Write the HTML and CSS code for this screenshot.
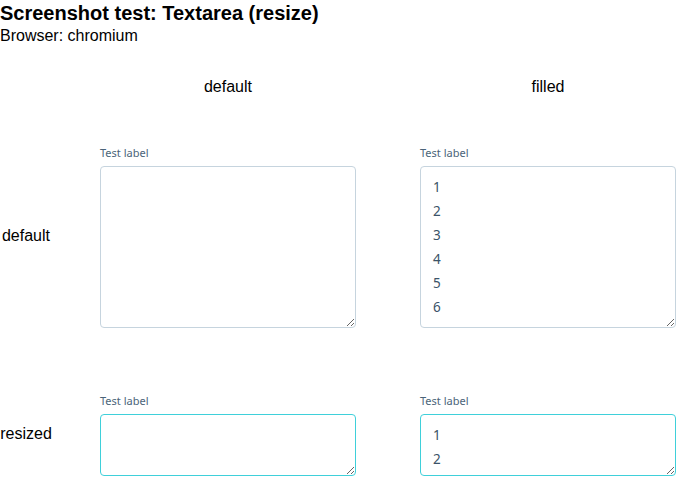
FILE: index.html
```html
<!DOCTYPE html>
<html>
<head>
<meta charset="utf-8">
<link rel="stylesheet" href="styles.css">
</head>
<body>
<h1 class="title">Screenshot test: Textarea (resize)</h1>
<p class="browser">Browser: chromium</p>
<div class="grid">
  <div class="corner"></div>
  <div class="col-head">default</div>
  <div class="col-head">filled</div>

  <div class="row-head">default</div>
  <div class="field">
    <label class="label">Test label</label>
    <textarea class="ta ta-default"></textarea>
  </div>
  <div class="field">
    <label class="label">Test label</label>
    <textarea class="ta ta-default">1
2
3
4
5
6</textarea>
  </div>

  <div class="row-head">resized</div>
  <div class="field">
    <label class="label">Test label</label>
    <textarea class="ta ta-resized"></textarea>
  </div>
  <div class="field">
    <label class="label">Test label</label>
    <textarea class="ta ta-resized">1
2</textarea>
  </div>
</div>
</body>
</html>
```
FILE: styles.css
```css
html, body {
  margin: 0;
  padding: 0;
  background: #fff;
}
body {
  font-family: "Liberation Sans", Arial, sans-serif;
  color: #000;
}
.title {
  font-size: 20px;
  font-weight: bold;
  line-height: 23px;
  margin: 2px 0 0 0;
}
.browser {
  font-size: 16px;
  line-height: 21px;
  margin: 0;
}
.grid {
  display: grid;
  grid-template-columns: 100px 320px 256px;
  row-gap: 66px;
  margin-top: 18px;
  align-items: center;
}
.col-head {
  width: 256px;
  font-size: 16px;
  text-align: center;
  line-height: 18px;
  padding-top: 14px;
  margin-bottom: -16px;
}
.row-head {
  font-size: 16px;
  width: 52px;
  text-align: center;
  margin-top: -2px;
}
.field {
  display: flex;
  flex-direction: column;
  width: 256px;
}
.label {
  font-family: "Noto Sans", sans-serif;
  font-size: 11px;
  line-height: 14px;
  color: #4b6479;
  margin-bottom: 6px;
}
.ta {
  box-sizing: border-box;
  width: 256px;
  margin: 0;
  border: 1px solid #c6d4de;
  border-radius: 4px;
  padding: 8px 12px 6px;
  font-family: "Noto Sans", sans-serif;
  font-size: 13.5px;
  line-height: 24px;
  color: #3b5368;
  background: #fff;
  resize: both;
  outline: none;
  overflow: hidden;
}
.ta-default {
  height: 162px;
}
.ta-resized {
  height: 62px;
  border-color: #3fd0da;
}
```
